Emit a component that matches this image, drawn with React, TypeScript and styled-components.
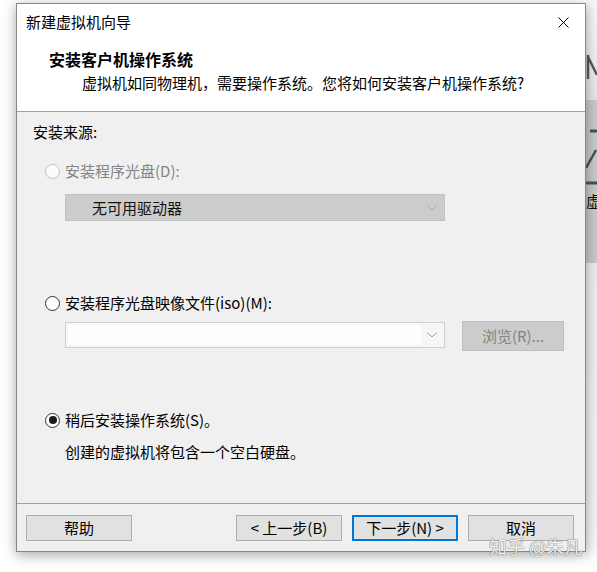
import React from 'react';
import styled, { createGlobalStyle } from 'styled-components';

const GlobalStyle = createGlobalStyle`
  html, body {
    margin: 0;
    padding: 0;
    background: #ffffff;
  }
  body {
    width: 597px;
    height: 572px;
    overflow: hidden;
    font-family: "Noto Sans CJK SC", "Noto Sans", sans-serif;
  }
`;

const Page = styled.div`
  display: flex;
  align-items: flex-start;
  width: 597px;
  height: 572px;
  padding-left: 16px;
  box-sizing: border-box;
`;

const Dialog = styled.div`
  position: relative;
  z-index: 1;
  flex-shrink: 0;
  margin-top: 3px;
  width: 570px;
  height: 549px;
  box-sizing: border-box;
  border: 1px solid #868686;
  background: #f0f0f0;
  box-shadow: 0 3px 12px rgba(0, 0, 0, 0.35);
  display: flex;
  flex-direction: column;
  font-size: 15px;
  color: #000;
`;

const TitleBar = styled.div`
  height: 36px;
  display: flex;
  align-items: center;
  justify-content: space-between;
  padding: 0 16px 0 9px;
  background: #ffffff;
  line-height: 20px;
`;

const Header = styled.div`
  height: 72px;
  box-sizing: border-box;
  padding: 9px 0 0 32px;
  background: #ffffff;
  border-bottom: 1px solid #a0a0a0;
  display: flex;
  flex-direction: column;
  gap: 4px;
  line-height: 20px;
`;

const HeaderTitle = styled.div`
  font-size: 16px;
  font-weight: 700;
`;

const HeaderSub = styled.div`
  padding-left: 33px;
`;

const Content = styled.div`
  height: 392px;
  box-sizing: border-box;
  padding: 10px 0 0 16px;
  border-bottom: 1px solid #a0a0a0;
  display: flex;
  flex-direction: column;
  line-height: 20px;
`;

const SourceLabel = styled.div``;

const RadioRow = styled.div<{ $top: number; $disabled?: boolean }>`
  margin-top: ${(p) => p.$top}px;
  margin-left: 12px;
  height: 20px;
  display: flex;
  align-items: center;
  gap: 5px;
  color: ${(p) => (p.$disabled ? '#838383' : '#000')};
`;

const RadioCircle = styled.span<{ $checked?: boolean; $disabled?: boolean }>`
  width: 15px;
  height: 15px;
  box-sizing: border-box;
  border-radius: 50%;
  border: 1px solid ${(p) => (p.$disabled ? '#c2c2c2' : '#333333')};
  background: ${(p) => (p.$disabled ? '#fbfbfb' : '#ffffff')};
  display: flex;
  align-items: center;
  justify-content: center;
  flex-shrink: 0;

  &::after {
    content: '';
    display: ${(p) => (p.$checked ? 'block' : 'none')};
    width: 8px;
    height: 8px;
    border-radius: 50%;
    background: #1a1a1a;
  }
`;

const DisabledSelect = styled.div`
  margin-top: 13px;
  margin-left: 32px;
  width: 380px;
  height: 27px;
  box-sizing: border-box;
  border: 1px solid #c2c2c2;
  background: #cccccc;
  display: flex;
  align-items: center;
  justify-content: space-between;
  padding: 0 7px 0 26px;
  color: #111;
`;

const IsoRow = styled.div`
  margin-top: 8px;
  margin-left: 32px;
  display: flex;
  align-items: flex-start;
  gap: 17px;
`;

const IsoCombo = styled.div`
  margin-top: 1px;
  width: 380px;
  height: 26px;
  box-sizing: border-box;
  border: 1px solid #d0d0d0;
  background: #f6f6f6;
  display: flex;
  align-items: center;
  padding: 2px 7px 2px 2px;
  gap: 6px;
`;

const IsoEdit = styled.div`
  flex: 1;
  align-self: stretch;
  background: #fdfdfd;
`;

const BrowseButton = styled.div`
  width: 102px;
  height: 30px;
  box-sizing: border-box;
  border: 1px solid #bfbfbf;
  background: #cccccc;
  color: #838383;
  display: flex;
  align-items: center;
  justify-content: center;
`;

const Note = styled.div`
  margin-top: 12px;
  margin-left: 32px;
`;

const ButtonBar = styled.div`
  height: 46px;
  box-sizing: border-box;
  padding: 11px 11px 0 9px;
  display: flex;
  align-items: flex-start;
  gap: 10px;
`;

const Spacer = styled.div`
  flex: 1;
`;

const Button = styled.div<{ $default?: boolean }>`
  width: 106px;
  height: 26px;
  box-sizing: border-box;
  border: ${(p) => (p.$default ? '2px solid #0078d7' : '1px solid #adadad')};
  background: #e1e1e1;
  display: flex;
  align-items: center;
  justify-content: center;
  line-height: 20px;
`;

const Watermark = styled.div`
  position: absolute;
  right: 3px;
  bottom: -6px;
  font-size: 18px;
  line-height: 22px;
  color: rgba(255, 255, 255, 0.92);
  text-shadow: 0 0 1px rgba(90, 90, 90, 0.8), 0 0 1px rgba(90, 90, 90, 0.8);
  white-space: nowrap;
  pointer-events: none;
`;

const Strip = styled.div`
  width: 11px;
  height: 572px;
  flex-shrink: 0;
  overflow: hidden;
  display: flex;
  flex-direction: column;
`;

const StripTop = styled.div`
  height: 100px;
  background: linear-gradient(#f7f7f7 0%, #f2f2f2 40%, #e4e4e4 100%);
`;

const StripPanel = styled.div`
  height: 163px;
  background: #c8c8c8;
  display: flex;
  flex-direction: column;
`;

const StripChar = styled.span`
  margin-top: 2px;
  font-size: 15px;
  line-height: 18px;
  color: #111;
  white-space: nowrap;
`;

const StripBottom = styled.div`
  flex: 1;
  background: linear-gradient(#ececec 0%, #f3f3f3 85%, #ffffff 100%);
`;

const Chevron = ({ color }: { color: string }) => (
  <svg width="10" height="6" viewBox="0 0 10 6">
    <polyline points="0.5,0.5 5,5 9.5,0.5" fill="none" stroke={color} strokeWidth="1" />
  </svg>
);

const CloseIcon = () => (
  <svg width="11" height="11" viewBox="0 0 11 11">
    <line x1="0.5" y1="0.5" x2="10.5" y2="10.5" stroke="#000" strokeWidth="1" />
    <line x1="10.5" y1="0.5" x2="0.5" y2="10.5" stroke="#000" strokeWidth="1" />
  </svg>
);

const App = () => {
  return (
    <>
      <GlobalStyle />
      <Page>
        <Dialog>
          <TitleBar>
            <span>新建虚拟机向导</span>
            <CloseIcon />
          </TitleBar>
          <Header>
            <HeaderTitle>安装客户机操作系统</HeaderTitle>
            <HeaderSub>虚拟机如同物理机，需要操作系统。您将如何安装客户机操作系统?</HeaderSub>
          </Header>
          <Content>
            <SourceLabel>安装来源:</SourceLabel>
            <RadioRow $top={19} $disabled>
              <RadioCircle $disabled />
              <span>安装程序光盘(D):</span>
            </RadioRow>
            <DisabledSelect>
              <span>无可用驱动器</span>
              <Chevron color="#a8a8a8" />
            </DisabledSelect>
            <RadioRow $top={72}>
              <RadioCircle />
              <span>安装程序光盘映像文件(iso)(M):</span>
            </RadioRow>
            <IsoRow>
              <IsoCombo>
                <IsoEdit />
                <Chevron color="#9a9a9a" />
              </IsoCombo>
              <BrowseButton>浏览(R)...</BrowseButton>
            </IsoRow>
            <RadioRow $top={59}>
              <RadioCircle $checked />
              <span>稍后安装操作系统(S)。</span>
            </RadioRow>
            <Note>创建的虚拟机将包含一个空白硬盘。</Note>
          </Content>
          <ButtonBar>
            <Button>帮助</Button>
            <Spacer />
            <Button>&lt; 上一步(B)</Button>
            <Button $default>下一步(N) &gt;</Button>
            <Button>取消</Button>
          </ButtonBar>
          <Watermark>知乎 @朱凡</Watermark>
        </Dialog>
        <Strip>
          <StripTop>
            <svg width="11" height="100" viewBox="0 0 11 100">
              <line x1="2" y1="55" x2="2" y2="79" stroke="#5a5a5a" strokeWidth="2.5" />
              <line x1="2" y1="57" x2="11" y2="75" stroke="#5a5a5a" strokeWidth="2.5" />
            </svg>
          </StripTop>
          <StripPanel>
            <svg width="11" height="90" viewBox="0 0 11 90">
              <line x1="4" y1="31" x2="11" y2="31" stroke="#47525c" strokeWidth="3" />
              <line x1="0" y1="68" x2="10" y2="50" stroke="#47525c" strokeWidth="2.5" />
              <line x1="0" y1="83" x2="11" y2="83" stroke="#47525c" strokeWidth="3" />
            </svg>
            <StripChar>虚拟</StripChar>
          </StripPanel>
          <StripBottom />
        </Strip>
      </Page>
    </>
  );
};

export default App;
